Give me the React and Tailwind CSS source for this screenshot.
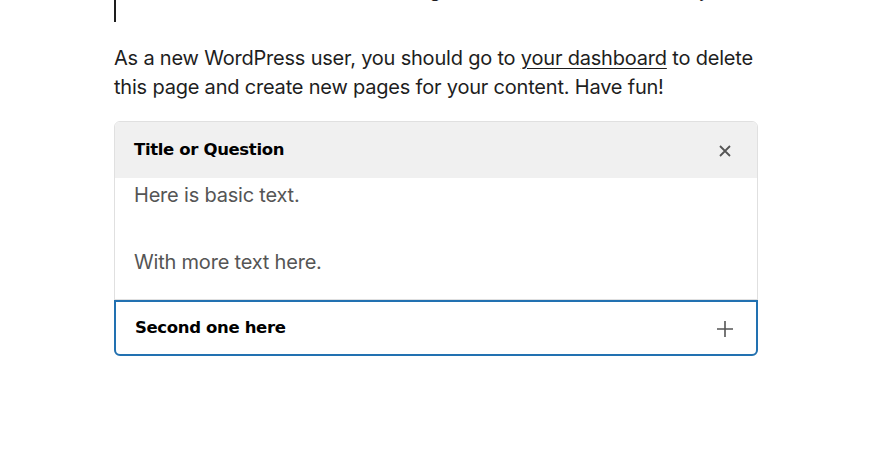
import { useState } from "react";

const items = [
  { title: "Title or Question", body: ["Here is basic text.", "With more text here."] },
  { title: "Second one here", body: ["More content goes here."] },
];

const CloseIcon = () => (
  <svg width="14" height="14" viewBox="0 0 14 14" fill="none" stroke="#555" strokeWidth="1.8">
    <path d="M2 2l10 10M12 2L2 12" />
  </svg>
);

const PlusIcon = () => (
  <svg width="16" height="16" viewBox="0 0 16 16" fill="none" stroke="#555" strokeWidth="1.6">
    <path d="M8 0v16M0 8h16" />
  </svg>
);

export default function App() {
  const [open, setOpen] = useState(0);

  return (
    <div className="min-h-[452px] w-[881px] bg-white font-['Inter',sans-serif] text-[#1e1e1e]">
      <div className="pl-[114px] w-[758px]">
        {/* quote from above, mostly scrolled out */}
        <div className="border-l-2 border-[#1e1e1e] h-[22px] overflow-hidden">
          <p className="-mt-[24px] pl-[120px] text-[19px] leading-[29px] tracking-[-0.4px] whitespace-nowrap">
            kinds of awesome things for all the Gotham community.
          </p>
        </div>

        <p className="mt-[22px] w-[644px] text-[20px] leading-[29px] tracking-[-0.2px]">
          As a new WordPress user, you should go to{" "}
          <a href="#" className="underline underline-offset-[3px] decoration-1">your dashboard</a>{" "}
          to delete this page and create new pages for your content. Have fun!
        </p>

        <div className="mt-[19px] w-[644px] rounded-[6px] border border-[#e0e0e0]">
          {items.map((item, i) => (
            <div key={item.title}>
              <button
                type="button"
                onClick={() => setOpen(open === i ? -1 : i)}
                className={
                  open === i
                    ? "w-full h-[56px] flex items-center justify-between pl-[19px] pr-[25px] pt-[1px] text-left bg-[#f0f0f0] rounded-t-[5px]"
                    : "w-[calc(100%+2px)] -mx-px -mb-px h-[56px] flex items-center justify-between pl-[19px] pr-[23px] pt-[1px] text-left bg-white border-2 border-[#2271b1] rounded-b-[6px]"
                }
              >
                <span className="font-['DejaVu_Sans',sans-serif] font-bold text-[16.5px] tracking-[-0.35px] text-black">
                  {item.title}
                </span>
                {open === i ? <CloseIcon /> : <PlusIcon />}
              </button>
              {open === i && (
                <div className="px-[19px] pt-[2px] pb-[22px] border-b border-[#e0e0e0] text-[20px] leading-[30px] tracking-[-0.2px] text-[#555]">
                  {item.body.map((t, j) => (
                    <p key={j} className={j > 0 ? "mt-[37px]" : ""}>{t}</p>
                  ))}
                </div>
              )}
            </div>
          ))}
        </div>
      </div>
    </div>
  );
}
